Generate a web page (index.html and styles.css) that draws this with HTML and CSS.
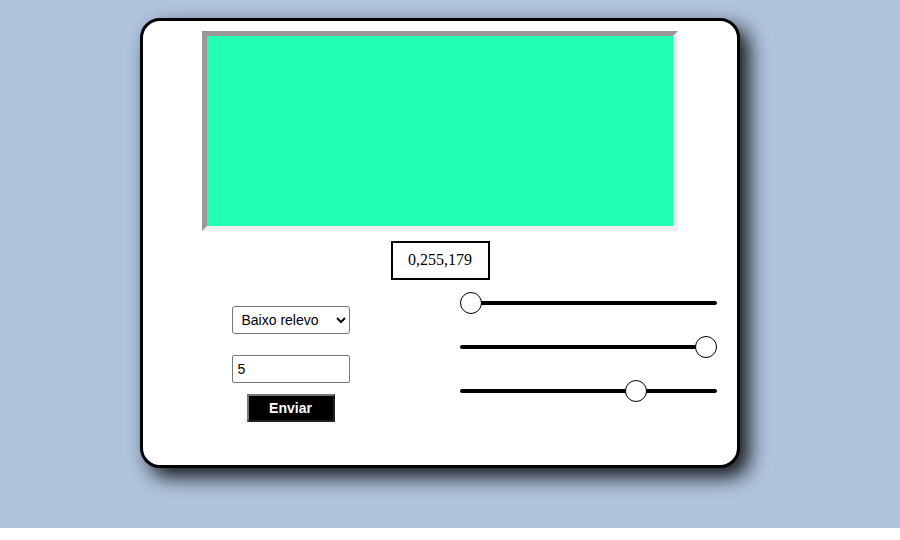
FILE: index.html
```html
<!DOCTYPE html>
<html lang="pt">
<head>
<meta charset="utf-8">
<title>Relevo</title>
<link rel="stylesheet" href="styles.css">
</head>
<body>
<div class="page">
  <div class="card">
    <div class="canvas"></div>
    <div class="output">0,255,179</div>
    <div class="controls">
      <div class="left">
        <select class="filter">
          <option>Baixo relevo</option>
          <option>Alto relevo</option>
        </select>
        <input class="amount" type="text" value="5">
        <button class="send">Enviar</button>
      </div>
      <div class="right">
        <input class="slider" type="range" min="0" max="255" value="0">
        <input class="slider" type="range" min="0" max="255" value="255">
        <input class="slider" type="range" min="0" max="255" value="179">
      </div>
    </div>
  </div>
</div>
</body>
</html>
```

FILE: styles.css
```css
html, body {
  margin: 0;
  padding: 0;
  background: #fff;
}

.page {
  background: #b0c4de;
  height: 528px;
  padding-top: 18px;
  box-sizing: border-box;
}

.card {
  width: 600px;
  height: 450px;
  box-sizing: border-box;
  margin-left: 140px;
  border: 3px solid #000;
  border-radius: 20px;
  background: #fff;
  box-shadow: 9px 9px 20px rgba(0, 0, 0, 0.9);
  padding-top: 10px;
  display: flex;
  flex-direction: column;
  align-items: center;
}

.canvas {
  width: 476px;
  height: 200px;
  box-sizing: border-box;
  border: 5px solid;
  border-color: #999 #eee #eee #999;
  background: rgb(34, 255, 179);
}

.output {
  margin-top: 10px;
  width: 99px;
  height: 39px;
  box-sizing: border-box;
  border: 2px solid #000;
  font-family: "Liberation Serif", serif;
  font-size: 16px;
  line-height: 33px;
  text-align: center;
  color: #000;
}

.controls {
  width: 100%;
  display: grid;
  grid-template-columns: 1fr 1fr;
}

.left {
  display: flex;
  flex-direction: column;
  align-items: center;
  padding-top: 26px;
  padding-right: 2px;
}

.filter {
  width: 118px;
  height: 28px;
  box-sizing: border-box;
  font-family: "Liberation Sans", Arial, sans-serif;
  font-size: 14px;
  border: 1px solid #767676;
  border-radius: 3px;
  background: #fff;
  color: #000;
  padding-left: 5px;
}

.amount {
  margin-top: 21px;
  width: 118px;
  height: 28px;
  box-sizing: border-box;
  font-family: "Liberation Sans", Arial, sans-serif;
  font-size: 14px;
  border: 1px solid #767676;
  border-radius: 2px;
  padding: 0 5px;
  color: #000;
}

.send {
  margin-top: 11px;
  width: 88px;
  height: 28px;
  box-sizing: border-box;
  background: #000;
  color: #fff;
  font-family: "Liberation Sans", Arial, sans-serif;
  font-size: 14px;
  font-weight: bold;
  border: 2px outset #767676;
  padding: 0;
}

.right {
  display: flex;
  flex-direction: column;
  padding-top: 12px;
  padding-left: 20px;
}

.slider {
  -webkit-appearance: none;
  appearance: none;
  width: 257px;
  height: 22px;
  margin: 0 0 22px 0;
  padding: 0;
  background: transparent;
}

.slider::-webkit-slider-runnable-track {
  height: 4px;
  background: #000;
  border-radius: 2px;
}

.slider::-webkit-slider-thumb {
  -webkit-appearance: none;
  appearance: none;
  width: 22px;
  height: 22px;
  box-sizing: border-box;
  border-radius: 50%;
  background: #fff;
  border: 1px solid #000;
  margin-top: -9px;
}
```
